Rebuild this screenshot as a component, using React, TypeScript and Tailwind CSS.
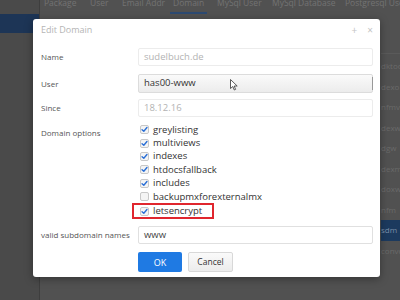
import React from "react";

const Check = ({ checked }: { checked: boolean }) => (
  <div className="w-[9px] h-[9px] rounded-[2px] border border-[#c8c8c8] bg-[#f4f4f4] flex items-center justify-center">
    {checked && (
      <svg width="7" height="7" viewBox="0 0 8 8">
        <path d="M1.2 4.2 L3.2 6 L6.8 1.8" fill="none" stroke="#2a6fd6" strokeWidth="1.6" strokeLinecap="round" strokeLinejoin="round" />
      </svg>
    )}
  </div>
);

export default function App() {
  const tabs: [string, string][] = [
    ["Package", "w-[46px] ml-[4px]"],
    ["User", "w-[32px]"],
    ["Email Addr", "w-[51px]"],
    ["Domain", "w-[44px]"],
    ["MySql User", "w-[55px]"],
    ["MySql Database", "w-[73px]"],
    ["Postgresql User", "w-[80px]"],
  ];
  const options: [string, boolean][] = [
    ["greylisting", true],
    ["multiviews", true],
    ["indexes", true],
    ["htdocsfallback", true],
    ["includes", true],
    ["backupmxforexternalmx", false],
  ];
  return (
    <div
      className="relative w-[400px] h-[300px] overflow-hidden bg-[#515151] flex"
      style={{ fontFamily: '"Open Sans", "Noto Sans", sans-serif' }}
    >
      {/* sidebar */}
      <div className="w-[40px] h-full bg-[#4a4a4a] border-r border-[#3e3e3e] pt-[14px] shrink-0">
        <div className="h-[19px] bg-[#1d3556]" />
      </div>
      {/* main */}
      <div className="flex-1 flex flex-col min-w-0">
        <div className="h-[17px] -mt-[3px] flex items-start text-[8.5px] text-[#737373] whitespace-nowrap overflow-hidden shrink-0">
          {tabs.map(([t, w]) => (
            <div key={t} className={`${w} shrink-0`}>
              {t === "Domain" ? (
                <span className="inline-block -ml-[3px] px-[3px] pb-[2px] border-b-2 border-[#2d4a72]">{t}</span>
              ) : (
                t
              )}
            </div>
          ))}
        </div>
        <div className="flex-1 flex justify-end">
          <div className="w-[19px] flex flex-col text-[8px] text-[#6a6a6a] pt-[2px] border-t border-[#5a5a5a] mt-[39px] whitespace-nowrap overflow-hidden">
            {["dktoo", "dexo", "nfmv", "dexw", "dgw", "dexm", "doxw", "nfm"].map((s, i) => (
              <div key={i} className="h-[20.5px] flex items-center">{s}</div>
            ))}
            <div className="h-[20.5px] flex items-center bg-[#1c3a5e] text-[#7a8fa8]">sdm</div>
            <div className="h-[20.5px] flex items-center">convo</div>
          </div>
        </div>
      </div>

      {/* dialog */}
      <div className="absolute left-[33px] top-[19px] w-[347px] h-[258px] bg-white rounded-[3px] shadow-[0_2px_8px_rgba(0,0,0,0.35)] flex flex-col">
        <div className="h-[20px] flex items-center justify-between pl-[8px] pr-[7px] mt-[1px]">
          <span className="text-[9px] text-[#b5b5b5]">Edit Domain</span>
          <div className="flex items-center gap-[10px] text-[#c4c4c4] text-[10px]">
            <span>+</span>
            <span>×</span>
          </div>
        </div>
        <div className="flex flex-col pl-[8px] pr-[7px] mt-[8px]">
          <div className="flex items-center h-[18px]">
            <div className="w-[97px] text-[8px] text-[#555]">Name</div>
            <div className="flex-1 h-[18px] border border-[#ececec] rounded-[2px] flex items-center px-[5px] text-[9.5px] text-[#b3b3b3]">sudelbuch.de</div>
          </div>
          <div className="flex items-center h-[19px] mt-[8px]">
            <div className="w-[97px] text-[8px] text-[#555]">User</div>
            <div className="relative flex-1 h-[19px] border border-[#dcdcdc] rounded-[2px] flex items-center px-[5px] text-[9.5px] text-[#333] bg-gradient-to-b from-[#fafafa] to-[#ececec]">
              has00-www
              <div className="absolute right-[-1px] top-[2px] w-[2px] h-[13px] border-r border-[#999]" />
              <svg className="absolute left-[91px] top-[4px]" width="8" height="12" viewBox="0 0 8 12">
                <path d="M0.5 0.5 L0.5 9.5 L2.8 7.5 L4.3 11 L5.6 10.4 L4.2 7 L7.2 7 Z" fill="#fff" stroke="#333" strokeWidth="0.8" strokeLinejoin="round" />
              </svg>
            </div>
          </div>
          <div className="flex items-center h-[18px] mt-[6px]">
            <div className="w-[97px] text-[8px] text-[#555]">Since</div>
            <div className="flex-1 h-[18px] border border-[#ececec] rounded-[2px] flex items-center px-[5px] text-[9.5px] text-[#b3b3b3]">18.12.16</div>
          </div>
          <div className="flex mt-[6px]">
            <div className="w-[97px] text-[8px] text-[#555] pt-[4px]">Domain options</div>
            <div className="flex flex-col">
              {options.map(([l, c]) => (
                <div key={l} className="flex items-center gap-[4px] h-[13.4px] pl-[2px] text-[9.5px] text-[#333]">
                  <Check checked={c} />
                  <span>{l}</span>
                </div>
              ))}
              <div className="flex items-center gap-[4px] h-[16px] w-[82px] -ml-[6px] pl-[6px] border-2 border-[#e0262e] text-[9.5px] text-[#333]">
                <Check checked={true} />
                <span>letsencrypt</span>
              </div>
            </div>
          </div>
          <div className="flex items-center h-[18px] mt-[7px]">
            <div className="w-[97px] text-[8px] text-[#555] whitespace-nowrap">valid subdomain names</div>
            <div className="flex-1 h-[18px] border border-[#e0e0e0] rounded-[2px] flex items-center px-[5px] text-[9.5px] text-[#444]">www</div>
          </div>
          <div className="flex items-center gap-[6px] ml-[97px] mt-[8px]">
            <div className="w-[44px] h-[20px] rounded-[2px] bg-[#1f7ae3] text-white text-[9px] flex items-center justify-center">OK</div>
            <div className="w-[45px] h-[20px] rounded-[2px] border border-[#d8d8d8] bg-gradient-to-b from-[#fafafa] to-[#ececec] text-[#333] text-[8.5px] flex items-center justify-center">Cancel</div>
          </div>
        </div>
      </div>
    </div>
  );
}
